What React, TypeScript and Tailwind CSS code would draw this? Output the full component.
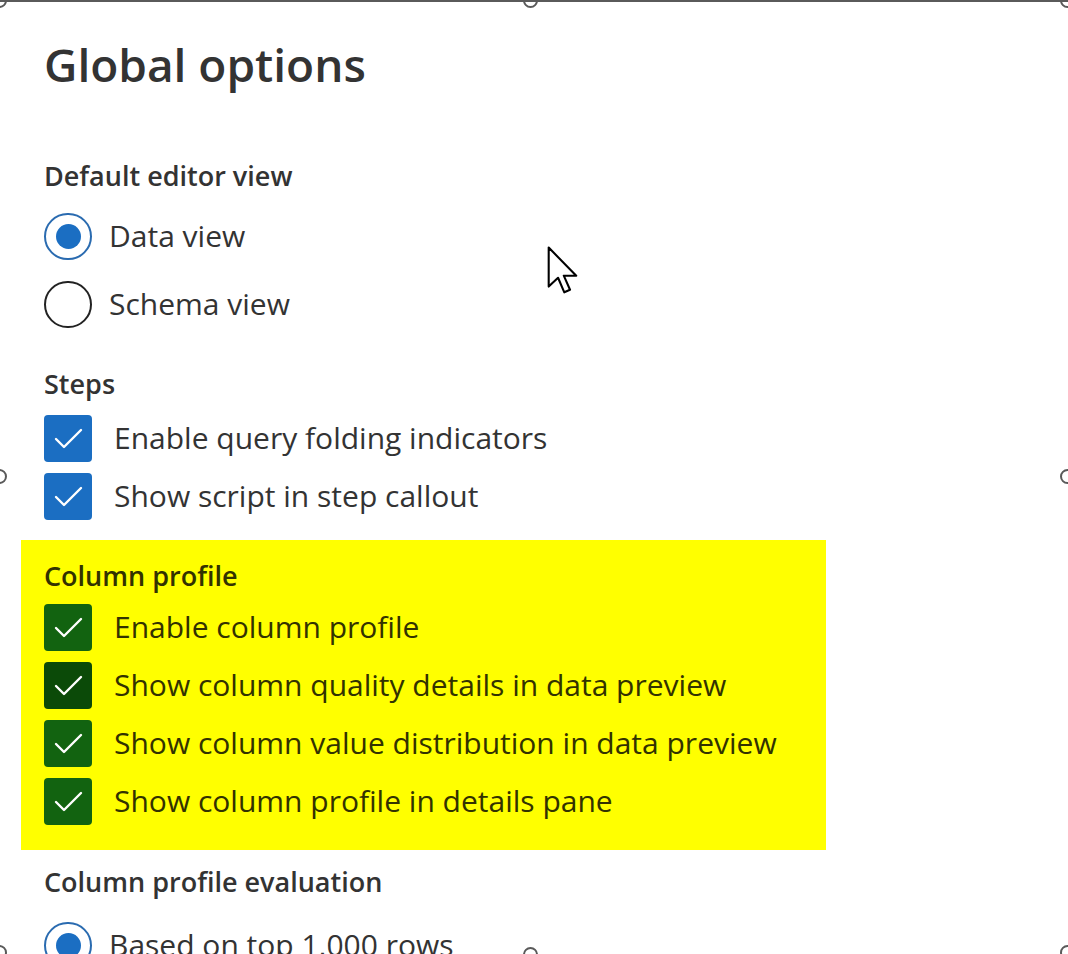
import React from 'react'

// Selection handle drawn on the frame edge
function Handle({ className }: { className: string }) {
  return (
    <div
      className={`absolute w-[15px] h-[15px] rounded-full bg-white border-[2.5px] border-[#5a5a5a] ${className}`}
    />
  )
}

function Radio({ checked, label }: { checked?: boolean; label: string }) {
  return (
    <div className="h-[68px] flex items-center">
      <div
        className={`w-[48px] h-[47px] rounded-full border-2 flex items-center justify-center shrink-0 ${
          checked ? 'border-[#2a6bb0]' : 'border-[#222]'
        }`}
      >
        {checked && <div className="w-[25px] h-[25px] rounded-full bg-[#1b6ec2]" />}
      </div>
      <span className="ml-[17px] text-[30px] leading-[40px] text-[#333]">{label}</span>
    </div>
  )
}

function Checkbox({
  label,
  box = 'bg-[#1b6ec2]',
  text = 'text-[#333]',
}: {
  label: string
  box?: string
  text?: string
}) {
  return (
    <div className="h-[58px] flex items-center">
      <div className={`w-[48px] h-[47px] rounded-[4px] flex items-center justify-center shrink-0 ${box}`}>
        <svg width="48" height="47" viewBox="0 0 48 47" fill="none">
          <path d="M12 24 L20 32 L37 15" stroke="white" strokeWidth="2.4" strokeLinecap="round" strokeLinejoin="round" />
        </svg>
      </div>
      <span className={`ml-[22px] text-[30px] leading-[40px] ${text}`}>{label}</span>
    </div>
  )
}

function Heading({ children, className = '' }: { children: React.ReactNode; className?: string }) {
  return <div className={`text-[27px] leading-[36px] font-semibold ${className}`}>{children}</div>
}

export default function App() {
  return (
    <div className="relative w-[1068px] h-[954px] overflow-hidden bg-white border-t-2 border-[#5a5a5a] pl-[44px] font-['Open_Sans',sans-serif]">
      <h1 className="mt-[34px] text-[46px] leading-[56px] font-semibold text-[#333]">Global options</h1>

      <Heading className="mt-[66px] text-[#333]">Default editor view</Heading>
      <div className="mt-[8px]">
        <Radio checked label="Data view" />
        <Radio label="Schema view" />
      </div>

      <Heading className="mt-[28px] text-[#333]">Steps</Heading>
      <div className="mt-[7px]">
        <Checkbox label="Enable query folding indicators" />
        <Checkbox label="Show script in step callout" />
      </div>

      {/* highlighted block */}
      <div className="mt-[15px] ml-[-23px] w-[805px] bg-[#ffff00] pl-[23px] pt-[18px] pb-[20px]">
        <Heading className="text-[#323200]">Column profile</Heading>
        <div className="mt-[4px]">
          <Checkbox label="Enable column profile" box="bg-[#126310]" text="text-[#323200]" />
          <Checkbox label="Show column quality details in data preview" box="bg-[#0b4a08]" text="text-[#323200]" />
          <Checkbox label="Show column value distribution in data preview" box="bg-[#126310]" text="text-[#323200]" />
          <Checkbox label="Show column profile in details pane" box="bg-[#126310]" text="text-[#323200]" />
        </div>
      </div>

      <Heading className="mt-[14px] text-[#333]">Column profile evaluation</Heading>
      <div className="mt-[11px]">
        <Radio checked label="Based on top 1,000 rows" />
      </div>

      {/* mouse pointer */}
      <svg className="absolute left-[546px] top-[243px]" width="34" height="52" viewBox="0 0 13 20">
        <path
          d="M1 1 L1 16 L4.6 12.6 L7 18.2 L9.2 17.2 L6.8 11.8 L11.6 11.8 Z"
          fill="white"
          stroke="black"
          strokeWidth="0.8"
          strokeLinejoin="round"
        />
      </svg>

      {/* selection handles */}
      <Handle className="left-[-8px] top-[-9px]" />
      <Handle className="left-[523px] top-[-9px]" />
      <Handle className="left-[1060px] top-[-9px]" />
      <Handle className="left-[-8px] top-[467px]" />
      <Handle className="left-[1060px] top-[467px]" />
      <Handle className="left-[-8px] top-[943px]" />
      <Handle className="left-[523px] top-[945px]" />
      <Handle className="left-[1060px] top-[943px]" />
    </div>
  )
}
